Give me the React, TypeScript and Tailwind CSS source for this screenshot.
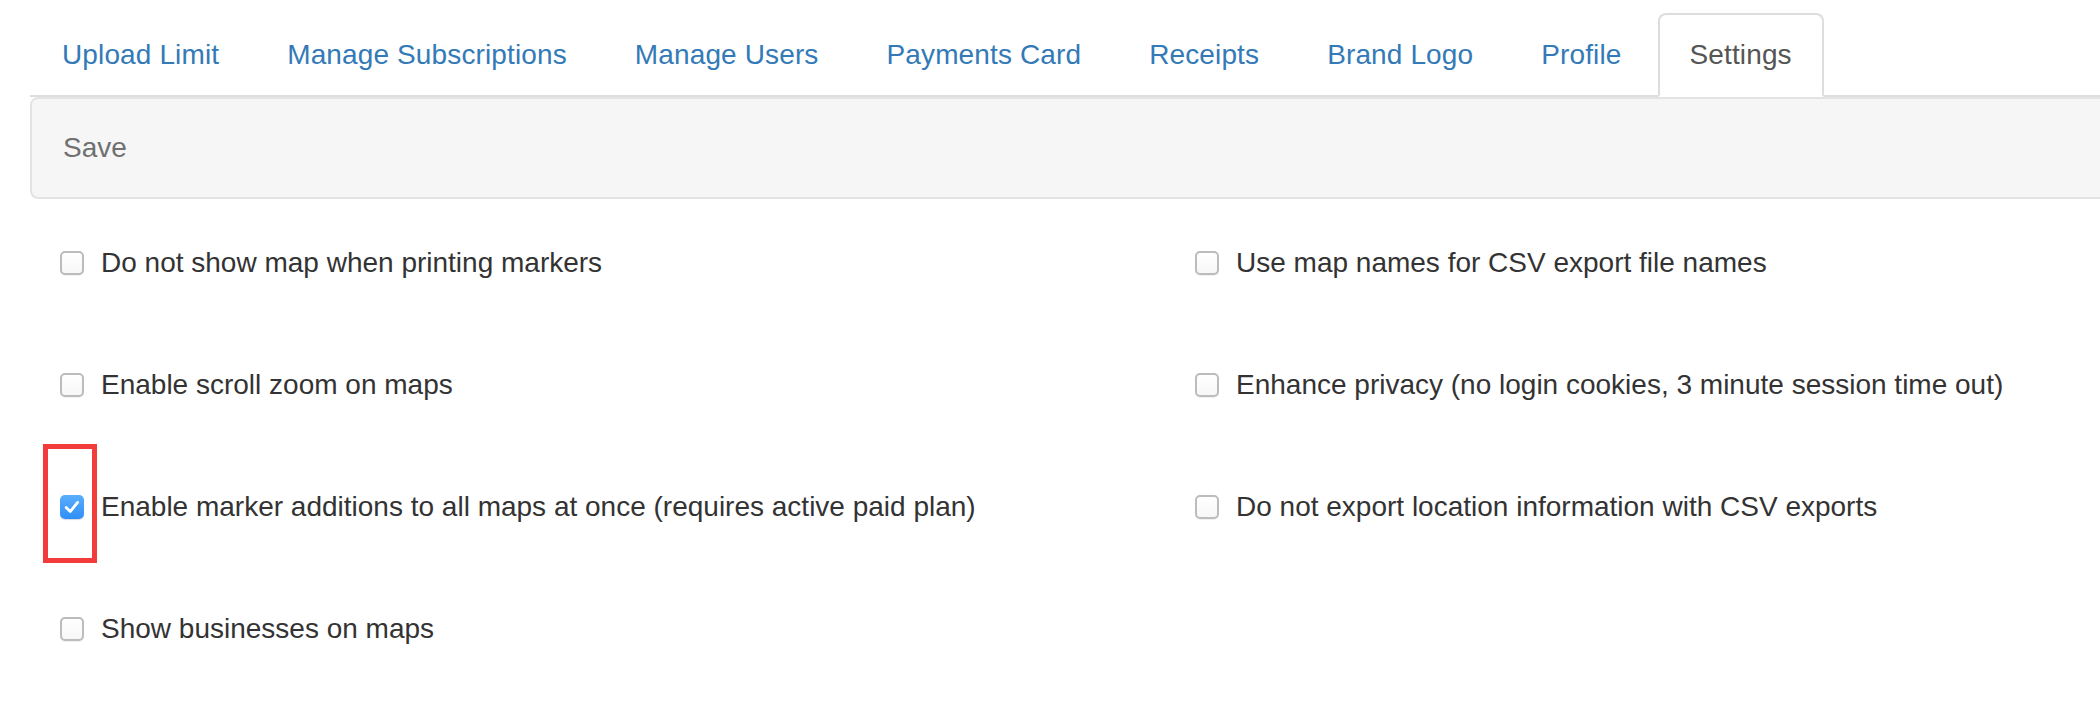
import React from "react";

const tabs = ["Upload Limit", "Manage Subscriptions", "Manage Users", "Payments Card", "Receipts", "Brand Logo", "Profile", "Settings"];

type Option = { label: string; checked?: boolean; marked?: boolean } | null;

// row-wise: left column, right column
const options: Option[] = [
  { label: "Do not show map when printing markers" },
  { label: "Use map names for CSV export file names" },
  { label: "Enable scroll zoom on maps" },
  { label: "Enhance privacy (no login cookies, 3 minute session time out)" },
  { label: "Enable marker additions to all maps at once (requires active paid plan)", checked: true, marked: true },
  { label: "Do not export location information with CSV exports" },
  { label: "Show businesses on maps" },
  null,
];

const Checkbox = ({ checked }: { checked?: boolean }) =>
  checked ? (
    <span className="flex h-[24px] w-[24px] shrink-0 items-center justify-center rounded-[5px] bg-gradient-to-b from-[#5aaefc] to-[#2f8ef6] shadow-[0_1px_1px_rgba(0,0,0,0.15)]">
      <svg viewBox="0 0 24 24" className="h-[24px] w-[24px]">
        <path d="M6.2 12.6 L10.2 16.6 L17.6 7.4" fill="none" stroke="#ffffff" strokeWidth="2.8" strokeLinecap="round" strokeLinejoin="round" />
      </svg>
    </span>
  ) : (
    <span className="h-[24px] w-[24px] shrink-0 rounded-[5px] border-2 border-[#bcbcbc] bg-gradient-to-b from-white to-[#f7f7f7] shadow-[0_1px_0_rgba(0,0,0,0.06)]" />
  );

export default function App() {
  return (
    <div className="h-[714px] w-[2100px] overflow-hidden bg-white pt-[13px] pl-[30px] text-[28px] leading-[40px] text-[#333333]" style={{ fontFamily: '"Liberation Sans", Arial, Helvetica, sans-serif' }}>
      <div className="w-[2270px]">
        {/* Tabs */}
        <ul className="flex border-b-2 border-[#dddddd] tracking-[0.13px]">
          {tabs.map((t) => {
            const active = t === "Settings";
            return (
              <li key={t} className="-mb-[2px] mr-[4px]">
                <span
                  className={
                    active
                      ? "block rounded-t-[8px] border-2 border-[#dddddd] border-b-transparent bg-white px-[30px] py-[20px] text-[#555555]"
                      : "block rounded-t-[8px] border-2 border-transparent px-[30px] py-[20px] text-[#337ab7]"
                  }
                >
                  {t}
                </span>
              </li>
            );
          })}
        </ul>

        {/* Toolbar well */}
        <div className="flex h-[102px] items-center rounded-[8px] border-2 border-[#e3e3e3] bg-[#f6f6f6] pl-[31px] text-[#707070]">
          Save
        </div>

        {/* Options */}
        <div className="mt-[3px] grid grid-cols-[1135px_1135px] auto-rows-[122px]">
          {options.map((o, i) =>
            o ? (
              <div key={i} className="relative flex items-center gap-[17px] pl-[30px]">
                <Checkbox checked={o.checked} />
                <span>{o.label}</span>
                {o.marked && (
                  <span className="absolute left-[13px] top-[-2px] h-[119px] w-[54px] border-[5px] border-[#f23c3c]" />
                )}
              </div>
            ) : (
              <div key={i} />
            )
          )}
        </div>
      </div>
    </div>
  );
}
